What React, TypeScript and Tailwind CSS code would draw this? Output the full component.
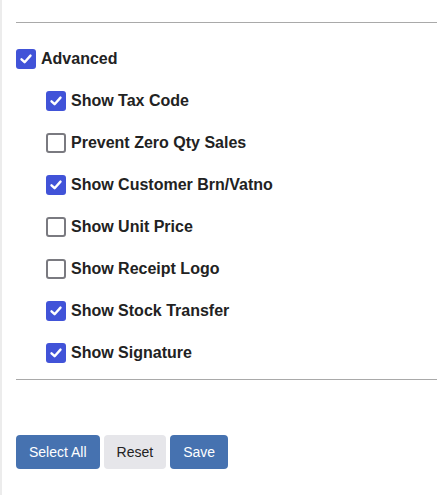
import React from "react";

function Box({ checked }: { checked: boolean }) {
  if (checked) {
    return (
      <span className="flex h-[20px] w-[20px] shrink-0 items-center justify-center rounded-[3px] bg-[#4153d8]">
        <svg width="14" height="14" viewBox="0 0 14 14" fill="none">
          <path d="M2.5 7.3 L5.6 10.2 L11.5 3.6" stroke="white" strokeWidth="2.4" strokeLinecap="round" strokeLinejoin="round" />
        </svg>
      </span>
    );
  }
  return <span className="h-[20px] w-[20px] shrink-0 rounded-[3px] border-2 border-[#7a7a80] bg-white" />;
}

function Row({ label, checked, indent }: { label: string; checked: boolean; indent?: boolean }) {
  return (
    <div className={`flex h-[42px] items-center gap-[5px] ${indent ? "pl-[30px]" : ""}`}>
      <Box checked={checked} />
      <span className="text-[16px] font-bold text-[#222]">{label}</span>
    </div>
  );
}

export default function App() {
  const items: [string, boolean][] = [
    ["Show Tax Code", true],
    ["Prevent Zero Qty Sales", false],
    ["Show Customer Brn/Vatno", true],
    ["Show Unit Price", false],
    ["Show Receipt Logo", false],
    ["Show Stock Transfer", true],
    ["Show Signature", true],
  ];
  return (
    <div
      className="min-h-[495px] w-[437px] border-l-2 border-[#ececec] bg-white pl-[14px]"
      style={{ fontFamily: '"Liberation Sans", Arial, sans-serif' }}
    >
      <div className="pt-[22px]">
        <div className="h-px bg-[#a9a9a9]" />
      </div>
      <div className="mt-[15px]">
        <Row label="Advanced" checked />
        {items.map(([l, c]) => (
          <Row key={l} label={l} checked={c} indent />
        ))}
      </div>
      <div className="mt-[5px] h-px bg-[#a9a9a9]" />
      <div className="mt-[55px] flex gap-[4px]">
        <button className="h-[34px] rounded-[4px] bg-[#4672b0] px-[13px] text-[14px] text-white">Select All</button>
        <button className="h-[34px] rounded-[4px] bg-[#e6e6ea] px-[13px] text-[14px] text-[#222]">Reset</button>
        <button className="h-[34px] rounded-[4px] bg-[#4672b0] px-[13px] text-[14px] text-white">Save</button>
      </div>
    </div>
  );
}
